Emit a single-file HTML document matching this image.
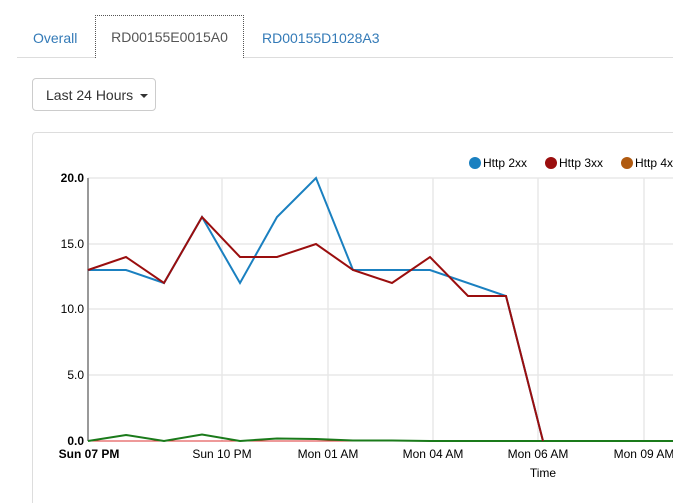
<!DOCTYPE html>
<html style="overflow:hidden;height:503px"><head><style>
body{margin:0;width:673px;height:503px;overflow:hidden;background:#fff;font-family:"Liberation Sans",sans-serif;font-size:14px;position:relative}
.tabs{position:absolute;left:17px;top:14px;right:0;height:43px;border-bottom:1px solid #ddd}
.tab{position:absolute;top:16px;color:#337ab7}
.act{position:absolute;left:78px;top:1px;width:147px;height:42px;border:1px dotted #555;border-bottom:none;background:#fff;color:#555;text-align:center;line-height:43px}
.btn{position:absolute;left:32px;top:78px;width:124px;height:33px;border:1px solid #ccc;border-radius:4px;color:#333;line-height:32px;box-sizing:border-box;padding-left:13px}
.car{display:inline-block;border-top:4px solid #333;border-left:4px solid transparent;border-right:4px solid transparent;vertical-align:middle;margin-left:3px}
.panel{position:absolute;left:32px;top:132px;width:660px;height:371px;border:1px solid #ddd;border-bottom:none;border-radius:4px 4px 0 0}
svg{position:absolute;left:0;top:0}
</style></head><body>
<div class="tabs">
<span class="tab" style="left:16px">Overall</span>
<div class="act">RD00155E0015A0</div>
<span class="tab" style="left:245px">RD00155D1028A3</span>
</div>
<div class="btn">Last 24 Hours <span class="car"></span></div>
<div class="panel"></div>
<svg width="673" height="503" font-family="Liberation Sans, sans-serif">
<g stroke="#e8e8e8" stroke-width="1.5">
<line x1="88" y1="178" x2="673" y2="178"/><line x1="88" y1="244" x2="673" y2="244"/><line x1="88" y1="309" x2="673" y2="309"/><line x1="88" y1="375" x2="673" y2="375"/>
<line x1="222" y1="178" x2="222" y2="441"/><line x1="328" y1="178" x2="328" y2="441"/><line x1="433" y1="178" x2="433" y2="441"/><line x1="538" y1="178" x2="538" y2="441"/><line x1="644" y1="178" x2="644" y2="441"/>
</g>
<line x1="88" y1="178" x2="88" y2="441" stroke="#999" stroke-width="2"/>
<line x1="88" y1="441" x2="673" y2="441" stroke="#d33" stroke-width="1"/>
<g font-size="12" fill="#000" text-anchor="end">
<text x="84" y="182" font-weight="bold">20.0</text><text x="84" y="248">15.0</text><text x="84" y="313">10.0</text><text x="84" y="379">5.0</text><text x="84" y="445" font-weight="bold">0.0</text>
</g>
<g font-size="12" fill="#000" text-anchor="middle">
<text x="89" y="458" font-weight="bold">Sun 07 PM</text><text x="222" y="458">Sun 10 PM</text><text x="328" y="458">Mon 01 AM</text><text x="433" y="458">Mon 04 AM</text><text x="538" y="458">Mon 06 AM</text><text x="644" y="458">Mon 09 AM</text>
<text x="543" y="477">Time</text>
</g>
<polyline fill="none" stroke="#1a7a1a" stroke-width="2" points="88,441 126,435 164,441 202,434.5 240,441 277,438.5 316,439 353,440.5 392,440.5 430,441 673,441"/>
<polyline fill="none" stroke="#1a80c0" stroke-width="2" points="88,270 126,270 164,283 202,217 240,283 277,217 316,178 353,270 392,270 430,270 506,296 543,441"/>
<polyline fill="none" stroke="#9a0e0e" stroke-width="2" points="88,270 126,257 164,283 202,217 240,257 277,257 316,244 353,270 392,283 430,257 468,296 506,296 543,441"/>
<g font-size="12" fill="#000">
<circle cx="475" cy="163" r="6" fill="#1a80c0"/><text x="483" y="167">Http 2xx</text>
<circle cx="551" cy="163" r="6" fill="#9a0e0e"/><text x="559" y="167">Http 3xx</text>
<circle cx="627" cy="163" r="6" fill="#b05a10"/><text x="635" y="167">Http 4xx</text>
</g>
</svg>
</body></html>
